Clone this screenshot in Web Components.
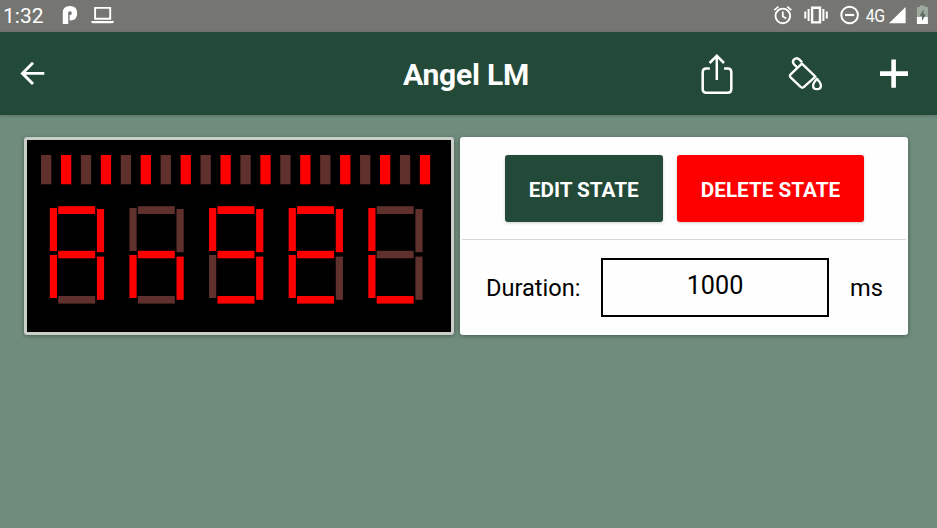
<!DOCTYPE html>
<html lang="en">
<head>
<meta charset="utf-8">
<title>Angel LM</title>
<style>
html,body{margin:0;height:100%;overflow:hidden}
body{font-family:Roboto,"Liberation Sans",sans-serif;background:#6f8c7d}
</style>
</head>
<body>
<state-app></state-app>
<script>
const define = (name, html, setup) => customElements.define(name, class extends HTMLElement {
  constructor() {
    super();
    this.attachShadow({mode: 'open'}).innerHTML = html;
  }
  connectedCallback() { if (setup) setup(this, this.shadowRoot); }
});

define('status-bar', `
<style>
:host{display:flex;height:32px;box-sizing:border-box;background:#757672;color:#fff;padding:0 6px 0 3px;justify-content:space-between}
.side{display:flex;align-items:center}
.time{font-size:21px;line-height:31px;width:59px}
.net{font-size:18.5px;line-height:30px;width:22px;letter-spacing:-.6px;transform:scaleX(.86);transform-origin:0 50%;text-indent:1px}
svg{display:block;fill:none;stroke:#fff}
</style>
<div class="side">
  <span class="time">1:32</span>
  <svg width="54" height="32" viewBox="62 0 54 32">
    <path d="M65.500 24V12.500Q65.500 8.600 70 8.600Q74.500 8.600 74.500 13.200Q74.500 17.700 70.200 17.700H69.600" stroke-width="5.400"/>
    <path d="M95.100 7.900h15.100v10.900H95.100z" stroke-width="1.900"/>
    <path d="M91.300 21h22.500v.8q0 1.400-1.400 1.400H92.700q-1.400 0-1.400-1.400z" fill="#fff" stroke="none"/>
  </svg>
</div>
<div class="side">
  <svg width="94" height="32" viewBox="771 0 94 32">
    <circle cx="782.800" cy="15.900" r="7.300" stroke-width="1.900"/>
    <path d="M782.800 11.500v5l3.500 2.100M774.300 10.100l4.100-3.500M791.300 10.100l-4.100-3.500" stroke-width="1.800"/>
    <path d="M812.100 7.700h7.900v14.700h-7.900z" stroke-width="2.400"/>
    <path d="M808.600 9v12M805.300 11.500v7M823.400 9v12M826.800 11.500v7" stroke-width="2"/>
    <circle cx="849.600" cy="15" r="8.300" stroke-width="2"/>
    <path d="M845 15h9.200" stroke-width="2.200"/>
  </svg>
  <span class="net">4G</span>
  <svg width="44" height="32" viewBox="887 0 44 32">
    <path d="M905.600 7v16.300H889z" fill="#fff" stroke="none"/>
    <path d="M920 6.900v-1.400h4.800v1.400h3.100v10.300h-11V6.900z" fill="#9fab9f" stroke="none"/>
    <path d="M916.900 17h11v7h-11z" fill="#fff" stroke="none"/>
    <path d="M923.600 9.400l-4 6.300h2.400v5.200l3.800-6.600h-2.200z" fill="#5c6a60" stroke="none"/>
  </svg>
</div>`);

define('app-header', `
<style>
:host{display:grid;grid-template:83px/247px 1fr 247px;align-items:center;height:83px;background:#234a38;color:#fff;box-shadow:0 1px 3px #0003;position:relative}
h1{margin:0;padding-right:5px;text-align:center;font-size:30px;font-weight:700;line-height:83px;letter-spacing:-.2px;padding-top:2px}
svg{display:block;fill:none;stroke:#fff}
</style>
<svg width="60" height="83" viewBox="0 32 60 83"><path d="M44.300 73.400H22.500M33 62.800L22.400 73.400L33 84" stroke-width="2.900"/></svg>
<h1><slot></slot></h1>
<svg width="247" height="83" viewBox="690 32 247 83">
  <path d="M709.800 68.400h-3.600q-3.500 0-3.500 3.500v17.400q0 3.500 3.500 3.500h21.600q3.500 0 3.500-3.500V71.900q0-3.500-3.500-3.500h-3.700" stroke-width="2.500"/>
  <path d="M716.800 80V56M709.600 63l7.200-7.200l7.200 7.200" stroke-width="2.500"/>
  <path d="M801.900 63.700L815.400 76.600L803.700 87.200Q802.300 88.300 800.900 87.200L790.600 77.300Q789.200 75.800 790.600 74.300Z" stroke-width="2.300" stroke-linejoin="round"/>
  <path d="M797.200 67.500l-3.100-3.100q-2.400-2.600 0-5q2.600-2.400 5.100 0l2.900 3" stroke-width="2.300"/>
  <path d="M817 78.700q-3.900 4.500-3.900 6.800q0 3.700 3.900 3.700t3.900-3.700q0-2.300-3.900-6.800z" stroke-width="2.300" stroke-linejoin="round"/>
  <path d="M880 73.600h28M893.600 59.500v28.200" stroke-width="4.600"/>
</svg>`);

define('segment-display', `
<style>
:host{display:block;box-sizing:border-box;width:430px;height:198px;background:#000;border:3px solid #cbcfca;border-radius:3px;box-shadow:0 1px 4px #0005}
svg{display:block}
.off{fill:#5f302c}.on{fill:#f00}
</style>
<svg width="424" height="192" viewBox="27 140 424 192"></svg>`, (el, root) => {
  let out = '';
  const rect = (x, y, w, h, on) => { out += `<rect class="${on ? 'on' : 'off'}" x="${x.toFixed(2)}" y="${y}" width="${w}" height="${h}"/>`; };
  for (let i = 0; i < 20; i++) rect(41 + i * 19.94, 155, 10.3, 29.3, i % 2);
  // Segment order: top, upper right, lower right, bottom, lower left, upper left, middle
  const shape = [[8.700,206.200,37,7.800],[47.400,209,7.200,43.200],[47.400,256.600,7.200,43.200],[8.700,296,37,7.600],[0.300,255,7.200,43],[0.300,208,7.200,43],[8.700,250.800,37,7.500]];
  el.getAttribute('digits').split(' ').forEach((bits, d) =>
    shape.forEach(([x, y, w, h], s) => rect(49.500 + d * 79.620 + x, y, w, h, bits[s] === '1')));
  root.querySelector('svg').innerHTML = out;
});

define('action-button', `
<style>
:host{display:block;box-sizing:border-box;height:67px;border-radius:3px;background:var(--fill);color:#fff;font-weight:700;font-size:20.700px;line-height:70px;text-align:center;white-space:nowrap;box-shadow:0 1px 3px #0003}
</style><slot></slot>`);

define('state-card', `
<style>
:host{display:block;box-sizing:border-box;width:448px;height:197.500px;padding:18px 2px 0;background:#fefefe;border-radius:3px;box-shadow:0 1px 4px #0005;color:#000}
.buttons{display:flex;gap:14.500px;padding-left:43px;padding-bottom:17px;border-bottom:1px solid #d3d6d4}
.edit{width:157.500px;--fill:#234a38}
.delete{width:187px;--fill:#f00}
.duration{display:flex;align-items:center;padding:18px 0 0 24px;font-size:23.600px}
.label{width:115px;padding-top:1px}
.field{box-sizing:border-box;width:228px;height:59px;border:2px solid #000;text-align:center;font-size:25.200px;line-height:52px}
.unit{margin-left:21px;padding-top:1px}
</style>
<div class="buttons"><action-button class="edit">EDIT STATE</action-button><action-button class="delete">DELETE STATE</action-button></div>
<div class="duration"><span class="label">Duration:</span><div class="field">1000</div><span class="unit">ms</span></div>`);

define('state-app', `
<style>
:host{display:block;height:528px;background:#6f8c7d}
main{display:flex;gap:6px;padding:22px 0 0 24px}
</style>
<status-bar></status-bar>
<app-header>Angel LM</app-header>
<main>
  <segment-display digits="1110111 0010101 1111011 1101111 0001110"></segment-display>
  <state-card></state-card>
</main>`);
</script>
</body>
</html>
